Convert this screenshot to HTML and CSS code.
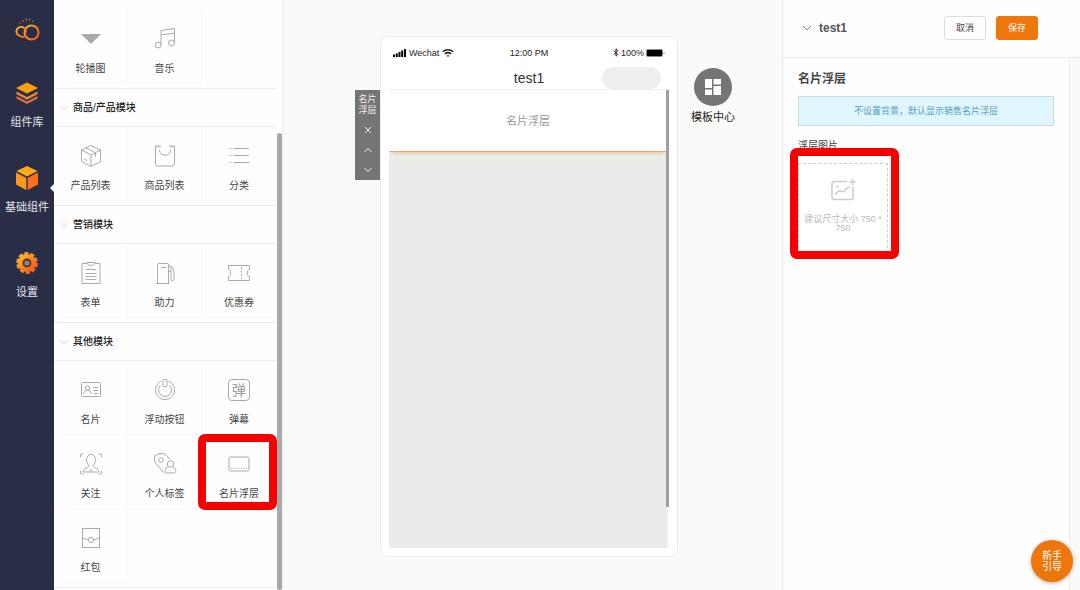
FILE: index.html
```html
<!DOCTYPE html>
<html lang="zh-CN">
<head>
    <meta charset="UTF-8">
    <meta name="viewport" content="width=device-width, initial-scale=1.0">
    <title>test1</title>
    <link rel="stylesheet" href="styles.css">
</head>
<body>

    <!-- Gradients shared by the sidebar icons -->
    <svg class="defs" width="0" height="0" aria-hidden="true">
        <defs>
            <linearGradient id="warm" x1="0" y1="0" x2="1" y2="1">
                <stop offset="0" stop-color="#f9b52a"/>
                <stop offset="1" stop-color="#f4581f"/>
            </linearGradient>
        </defs>
    </svg>

    <!-- Sidebar -->
    <nav class="sidebar">
        <a href="#" class="logo" aria-label="首页">
            <svg width="26" height="26" viewBox="0 0 26 26" fill="none" stroke="url(#warm)">
                <circle cx="17.500" cy="15.500" r="7" stroke-width="2"/>
                <path d="M12 18.500C10.500 20 8 20.200 6.200 19A4.600 4.600 0 1 1 10.500 11.500C11.600 12.300 12 14 12.300 15.500" stroke-width="2"/>
                <path d="M5.500 5.500l1 1.500M8.500 3l.8 1.800M12 1.500l.3 2M15.500 1.500l-.2 2M19 3.500l-.7 1.500" stroke="#c98a3c"/>
            </svg>
        </a>
        <a href="#" class="nav-item">
            <svg width="24" height="24" viewBox="0 0 24 24">
                <path d="M12 1.500L23 7 12 12.500 1 7z" fill="#ffa010"/>
                <path d="M1.500 10.500L12 16l10.500-5.500v2.700L12 18.700 1.500 13.200z" fill="#e8853c"/>
                <path d="M1.500 15L12 20.500 22.500 15v2.500L12 23 1.500 17.500z" fill="#dd7040"/>
            </svg>
            <span>组件库</span>
        </a>
        <a href="#" class="nav-item active">
            <svg width="24" height="24" viewBox="0 0 24 24">
                <path d="M12 0L22.500 5 12 10.500 1.500 5z" fill="#fdaa18"/>
                <path d="M1 6.500l10.300 5.400V24L1 18.500z" fill="#f99a1c"/>
                <path d="M23 6.500l-10.300 5.400V24L23 18.500z" fill="#f9701c"/>
            </svg>
            <span>基础组件</span>
        </a>
        <a href="#" class="nav-item">
            <svg width="24" height="24" viewBox="0 0 24 24">
                <g fill="none" stroke="url(#warm)">
                    <circle cx="12" cy="12" r="6.600" stroke-width="5"/>
                    <circle cx="12" cy="12" r="9.600" stroke-width="2.600" stroke-dasharray="4.200 1.832"/>
                </g>
                <circle cx="12" cy="12" r="4.400" fill="#593022"/>
                <circle cx="12" cy="12" r="2.600" fill="#8a8580"/>
            </svg>
            <span>设置</span>
        </a>
    </nav>

    <!-- Component library -->
    <aside class="library">
        <div class="scroll-thumb"></div>

        <section class="group">
            <div class="tiles">
                <button class="tile">
                    <svg viewBox="0 0 24 24"><path d="M2 7h20L12 17z" fill="#aaa" stroke="none"/></svg>
                    <span>轮播图</span>
                </button>
                <button class="tile">
                    <svg viewBox="0 0 24 24"><circle cx="5" cy="18" r="3"/><circle cx="18.500" cy="16" r="3"/><path d="M8 18V3.500L21.500 1.500V16M8 8l13.500-2"/></svg>
                    <span>音乐</span>
                </button>
            </div>
        </section>

        <section class="group">
            <button class="group-title"><svg viewBox="0 0 8 6"><path d="M.5 1L4 4.500 7.500 1"/></svg>商品/产品模块</button>
            <div class="tiles">
                <button class="tile">
                    <svg viewBox="0 0 24 24"><path d="M12 1.500l9.500 4.500v11.500L12 22.500l-9.500-5V6zM2.500 6L12 11l9.500-5M12 11v11.500M7 3.800l9.500 5v4M5 15l3 1.600"/></svg>
                    <span>产品列表</span>
                </button>
                <button class="tile">
                    <svg viewBox="0 0 24 24"><path d="M8 2H2.500v18a2 2 0 0 0 2 2h15a2 2 0 0 0 2-2V2H16M5 2v2M19 2v2M6.500 6c0 7 11 7 11 0"/></svg>
                    <span>商品列表</span>
                </button>
                <button class="tile">
                    <svg viewBox="0 0 24 24"><path d="M6.500 4.500H22M6.500 11.500H22M6.500 18.500H22M2.500 4.500H4M2.500 11.500H4M2.500 18.500H4"/></svg>
                    <span>分类</span>
                </button>
            </div>
        </section>

        <section class="group">
            <button class="group-title"><svg viewBox="0 0 8 6"><path d="M.5 1L4 4.500 7.500 1"/></svg>营销模块</button>
            <div class="tiles">
                <button class="tile">
                    <svg viewBox="0 0 24 24"><path d="M8 2.500H3v20h18v-20h-5M8 1.500c0 4 8 4 8 0zM6.500 8.500h11M6.500 12.500h11M6.500 15.500h11M6.500 18.500h11"/></svg>
                    <span>表单</span>
                </button>
                <button class="tile">
                    <svg viewBox="0 0 24 24"><path d="M4.500 22V3.500a1 1 0 0 1 1-1h9a1 1 0 0 1 1 1V22M3 22.500h13.500M8 6.500h5M16 4.500l3 1.500c1.500 2 2 4 2 6.500v6c0 2-3 2-3 0v-8h-2M18 6v4.500"/></svg>
                    <span>助力</span>
                </button>
                <button class="tile">
                    <svg viewBox="0 0 24 24"><path d="M1.500 4.500h21v4c-3 0-3 7 0 7v4h-21v-4c3 0 3-7 0-7z"/><path d="M14.500 6v12" stroke-dasharray="2 1.500"/></svg>
                    <span>优惠券</span>
                </button>
            </div>
        </section>

        <section class="group">
            <button class="group-title"><svg viewBox="0 0 8 6"><path d="M.5 1L4 4.500 7.500 1"/></svg>其他模块</button>
            <div class="tiles">
                <button class="tile">
                    <svg viewBox="0 0 24 24"><rect x="2.500" y="4.500" width="19" height="14" rx="1"/><circle cx="8.500" cy="10" r="2.200"/><path d="M4.500 16c.5-5 7.500-5 8 0M14 9.500h5M14 12.500h5M15 15.500h4"/></svg>
                    <span>名片</span>
                </button>
                <button class="tile">
                    <svg viewBox="0 0 24 24"><path d="M8.500 3.200a9.500 9.500 0 1 0 7 0"/><path d="M7.500 7.200a6.500 6.500 0 1 0 9 0"/><rect x="10" y="1.500" width="4" height="7" rx="1"/></svg>
                    <span>浮动按钮</span>
                </button>
                <button class="tile">
                    <span class="glyph">弹</span>
                    <span>弹幕</span>
                </button>
                <button class="tile">
                    <svg viewBox="0 0 24 24"><path d="M1.500 5V3a1 1 0 0 1 1-1h2M19.500 2h2a1 1 0 0 1 1 1v2M1.500 19v2a1 1 0 0 0 1 1h2M19.500 22h2a1 1 0 0 0 1-1v-2"/><path d="M10 13.500c-4-3.500-3-11 2-11s6 7.500 2 11c-.5 2.500 6 2 6 6.500H4c0-4.500 6.500-4 6-6.500zM12 17v3"/></svg>
                    <span>关注</span>
                </button>
                <button class="tile">
                    <svg viewBox="0 0 24 24"><path d="M11 21L1.800 10 1.500 4 6 1.500l6 .5 5 5"/><circle cx="8" cy="8" r="2.300"/><circle cx="17.500" cy="12" r="3.200"/><path d="M15 15c-4 .5-3.500 6-1 6h7c2.500 0 2.500-5.500-1.500-6"/></svg>
                    <span>个人标签</span>
                </button>
                <button class="tile marked">
                    <svg viewBox="0 0 24 24"><rect x="2" y="5" width="20" height="14" rx="1.500"/><path d="M4 16.500h16" stroke-dasharray="1 1.500"/></svg>
                    <span>名片浮层</span>
                </button>
                <button class="tile">
                    <svg viewBox="0 0 24 24"><rect x="3.500" y="2.500" width="17" height="19"/><path d="M3.500 12l6 2M20.500 12l-6 2"/><circle cx="12" cy="14" r="2.600"/></svg>
                    <span>红包</span>
                </button>
            </div>
        </section>
    </aside>

    <!-- Canvas with the phone preview -->
    <main class="canvas">
        <div class="block-tools">
            <span>名片<br>浮层</span>
            <button aria-label="删除"><svg viewBox="0 0 10 10"><path d="M2 2l6 6M8 2L2 8"/></svg></button>
            <button aria-label="上移"><svg viewBox="0 0 10 10"><path d="M1.500 7L5 3.500 8.500 7"/></svg></button>
            <button aria-label="下移"><svg viewBox="0 0 10 10"><path d="M1.500 3L5 6.500 8.500 3"/></svg></button>
        </div>

        <div class="phone">
            <div class="status-bar">
                <div class="carrier">
                    <svg width="13" height="8" viewBox="0 0 13 8"><path d="M0 5.500h2V8H0zM2.800 4.500h2V8h-2zM5.500 3h2v5h-2zM8.200 1.500h2V8h-2zM11 0h2v8h-2z"/></svg>
                    <span>Wechat</span>
                    <svg width="12" height="8" viewBox="0 0 12 8" fill="none" stroke="#222" stroke-width="1.500"><path d="M.8 2.800c3-2.600 7.400-2.600 10.400 0M2.800 4.900c2-1.600 4.400-1.600 6.400 0"/><path d="M4.500 6.300h3L6 7.900z" fill="#222" stroke="none"/></svg>
                </div>
                <time>12:00 PM</time>
                <div class="power">
                    <svg width="6" height="9" viewBox="0 0 6 9" fill="none" stroke="#222"><path d="M.8 2.500l4 4L3 8.200V.8l1.800 1.700-4 4"/></svg>
                    <span>100%</span>
                    <svg width="19" height="8" viewBox="0 0 19 8"><rect x=".5" y=".5" width="16" height="7" rx="1" fill="none" stroke="#888"/><rect x="1" y="1" width="15" height="6"/><path d="M17.500 3h1v2h-1z" fill="#888"/></svg>
                </div>
            </div>
            <div class="title-bar">
                <span></span>
                <h1>test1</h1>
                <span class="capsule"></span>
            </div>
            <div class="screen">
                <div class="phone-thumb"></div>
                <div class="card-layer">名片浮层</div>
            </div>
        </div>

        <a href="#" class="templates">
            <span class="templates-icon">
                <svg width="16" height="16" viewBox="0 0 16 16" fill="#fff"><path d="M0 0h7v9H0zM0 10.500h7V16H0zM8.500 0H16v5.500H8.500zM8.500 7H16v9H8.500z"/></svg>
            </span>
            <span>模板中心</span>
        </a>
    </main>

    <!-- Settings -->
    <aside class="settings">
        <header class="settings-header">
            <svg width="10" height="6" viewBox="0 0 10 6" fill="none" stroke="#888"><path d="M1 1l4 4 4-4"/></svg>
            <h2>test1</h2>
            <button class="btn">取消</button>
            <button class="btn btn-primary">保存</button>
        </header>
        <div class="settings-body">
            <div class="fields">
                <h3>名片浮层</h3>
                <p class="notice">不设置背景，默认显示销售名片浮层</p>
                <label for="layerImage">浮层图片</label>
                <div class="upload-wrap">
                    <button class="upload" id="layerImage">
                        <svg width="26" height="24" viewBox="0 0 26 24" fill="none" stroke="#ccc"><path d="M17 3.500H4a2 2 0 0 0-2 2v14a2 2 0 0 0 2 2h17a2 2 0 0 0 2-2V9" stroke-width="1.500"/><path d="M5 16c2 0 3-4 5-3s2 1.500 4 0 3-4 6-4M22.500 1v6M19.500 4h6" stroke-width="1.500"/><circle cx="7.500" cy="8.500" r=".8"/></svg>
                        <span>建议尺寸大小 750 * 750</span>
                    </button>
                </div>
            </div>
            <div class="track"></div>
        </div>
    </aside>

    <button class="guide">新手<br>引导</button>

</body>
</html>
```
FILE: styles.css
```css
/* Reset and global styling */
* {
    margin: 0;
    padding: 0;
    box-sizing: border-box;
}
body {
    font-family: "Liberation Sans", "Noto Sans CJK SC", sans-serif;
    font-size: 10px;
    line-height: 14px;
    color: #444;
    background-color: #fafaf9;
    display: flex;
    height: 100vh;
    overflow: hidden;
}
button {
    font: inherit;
    color: inherit;
    background: none;
    border: none;
    cursor: pointer;
}
a {
    color: inherit;
    text-decoration: none;
}
svg {
    display: block;
    flex: none;
}
.defs {
    position: absolute;
}

/* Sidebar styling */
.sidebar {
    flex: none;
    width: 54px;
    background-color: #292e46;
    color: #e4e6ee;
    font-size: 11px;
    display: flex;
    flex-direction: column;
    align-items: center;
    padding-top: 17px;
}
.logo {
    margin-bottom: 38px;
}
.nav-item {
    position: relative;
    width: 100%;
    height: 85px;
    display: flex;
    flex-direction: column;
    align-items: center;
    gap: 10px;
}
.nav-item.active::after {
    content: "";
    position: absolute;
    right: 0;
    top: 18px;
    border: 4px solid transparent;
    border-left: none;
    border-right-color: #fff;
}

/* Component library styling */
.library {
    position: relative;
    flex: none;
    width: 229px;
    padding: 10px 6px 0 0;
    background-color: #fefefe;
    border-right: 1px solid #ececec;
    overflow: hidden;
}
.scroll-thumb {
    position: absolute;
    right: 0;
    top: 133px;
    bottom: 0;
    width: 5px;
    border-radius: 3px;
    background-color: #a9a9a9;
}
.group {
    border-bottom: 1px solid #ececec;
}
.group-title {
    width: 100%;
    height: 38px;
    padding-left: 6px;
    display: flex;
    align-items: center;
    gap: 5px;
    font-weight: 500;
    color: #222;
    border-bottom: 1px solid #ececec;
}
.group-title svg {
    width: 8px;
    height: 6px;
    fill: none;
    stroke: #ccc;
}
.tiles {
    display: grid;
    grid-template-columns: repeat(3, 1fr);
    padding-bottom: 4px;
}
.tile {
    position: relative;
    height: 74px;
    padding-top: 17px;
    display: flex;
    flex-direction: column;
    align-items: center;
    gap: 11px;
    border-right: 1px solid #f8f8f8;
    border-bottom: 1px solid #f8f8f8;
}
.tile:nth-child(3n) {
    border-right: none;
}
.tile svg {
    width: 24px;
    height: 24px;
    fill: none;
    stroke: #aaa;
}
.glyph {
    width: 22px;
    height: 22px;
    margin: 1px;
    border: 1px solid #aaa;
    border-radius: 4px;
    font-size: 14px;
    line-height: 20px;
    color: #999;
}
.marked::after {
    content: "";
    position: absolute;
    inset: -1px -1px -2px -4px;
    border: 8px solid #f80000;
    border-radius: 7px;
}

/* Canvas styling */
.canvas {
    flex: 1;
    display: grid;
    grid-template-columns: 1fr 298px 1fr;
    padding: 36px 7px 33px 0;
}
.block-tools {
    justify-self: end;
    align-self: start;
    width: 25px;
    margin-top: 54px;
    padding-top: 4px;
    background-color: #757674;
    color: #eee;
    font-size: 9px;
    line-height: 11px;
    text-align: center;
}
.block-tools button {
    width: 100%;
    height: 20px;
    display: flex;
    align-items: center;
    justify-content: center;
}
.block-tools span {
    display: block;
    margin-bottom: 4px;
}
.block-tools svg {
    width: 10px;
    height: 10px;
    fill: none;
    stroke: #eee;
}

/* Phone styling */
.phone {
    display: flex;
    flex-direction: column;
    padding: 8px;
    background-color: #fff;
    border: 1px solid #ededed;
    border-radius: 7px;
}
.status-bar,
.title-bar {
    display: grid;
    grid-template-columns: 1fr auto 1fr;
    align-items: center;
}
.status-bar {
    height: 15px;
    padding: 0 4px;
    font-size: 9px;
    color: #222;
}
.carrier,
.power {
    display: flex;
    align-items: center;
    gap: 3px;
}
.power {
    justify-content: flex-end;
    gap: 2px;
}
.title-bar {
    height: 30px;
    padding: 6px 8px 0;
    border-bottom: 1px solid #eee;
}
.title-bar h1 {
    font-size: 14px;
    font-weight: normal;
    color: #333;
}
.capsule {
    justify-self: end;
    width: 59px;
    height: 22px;
    border-radius: 11px;
    background-color: #eeeeed;
}
.screen {
    position: relative;
    flex: 1;
    background-color: #ebebea;
    border-right: 2px solid #f8f8f8;
}
.phone-thumb {
    position: absolute;
    right: -2px;
    top: 0;
    bottom: 9%;
    width: 3px;
    background-color: #a0a0a0;
}
.card-layer {
    height: 62px;
    display: flex;
    align-items: center;
    justify-content: center;
    background-color: #fff;
    color: #999;
    font-size: 11px;
    border-bottom: 1px solid #e3aa6b;
    box-shadow: 0 4px 3px -3px rgba(240, 160, 80, 0.6);
}
.templates {
    justify-self: start;
    align-self: start;
    margin: 32px 0 0 13px;
    display: flex;
    flex-direction: column;
    align-items: center;
    gap: 4px;
    font-size: 11px;
    color: #222;
}
.templates-icon {
    width: 38px;
    height: 38px;
    border-radius: 50%;
    background-color: #757674;
    display: flex;
    align-items: center;
    justify-content: center;
}

/* Settings styling */
.settings {
    flex: none;
    width: 298px;
    display: flex;
    flex-direction: column;
    background-color: #fefefe;
    border-left: 1px solid #e8e8e8;
}
.settings-header {
    height: 58px;
    padding: 0 42px 2px 19px;
    display: flex;
    align-items: center;
    gap: 10px;
    border-bottom: 1px solid #e8e8e8;
}
.settings-header h2 {
    flex: 1;
    margin-left: -3px;
    font-size: 12px;
    color: #555;
}
.btn {
    width: 42px;
    height: 24px;
    border: 1px solid #ddd;
    border-radius: 3px;
    font-size: 9px;
}
.btn-primary {
    background-color: #ee760b;
    border-color: #ee760b;
    color: #fff;
}
.settings-body {
    flex: 1;
    display: flex;
}
.fields {
    flex: 1;
    padding: 13px 15px;
}
.fields h3 {
    font-size: 12px;
    line-height: 16px;
    font-weight: bold;
    color: #444;
    margin-bottom: 9px;
}
.notice {
    height: 30px;
    line-height: 28px;
    margin-bottom: 13px;
    border: 1px solid #bfdbe3;
    background-color: #e0f6fe;
    color: #55a3b8;
    font-size: 9px;
    text-align: center;
}
.fields label {
    display: block;
}
.upload-wrap {
    width: 109px;
    height: 111px;
    margin: -5px 0 0 -8px;
    padding: 15px 11px 6px 8px;
    position: relative;
}
.upload-wrap::after {
    content: "";
    position: absolute;
    inset: 0;
    border: 8px solid #f80000;
    border-radius: 7px;
}
.upload {
    width: 90px;
    height: 90px;
    padding-bottom: 6px;
    display: flex;
    flex-direction: column;
    align-items: center;
    justify-content: center;
    gap: 13px;
    border: 1px dashed #ccc;
    background-color: #fff;
    color: #bbb;
    font-size: 9px;
    line-height: 9px;
}
.track {
    width: 11px;
    border-left: 1px solid #ececec;
    background-color: #fafafb;
}

/* Floating guide button */
.guide {
    position: fixed;
    right: 7px;
    bottom: 8px;
    width: 42px;
    height: 42px;
    border-radius: 50%;
    background-color: #ee760b;
    color: #fff;
    line-height: 11px;
    box-shadow: 0 1px 4px rgba(0, 0, 0, 0.3);
}
```
